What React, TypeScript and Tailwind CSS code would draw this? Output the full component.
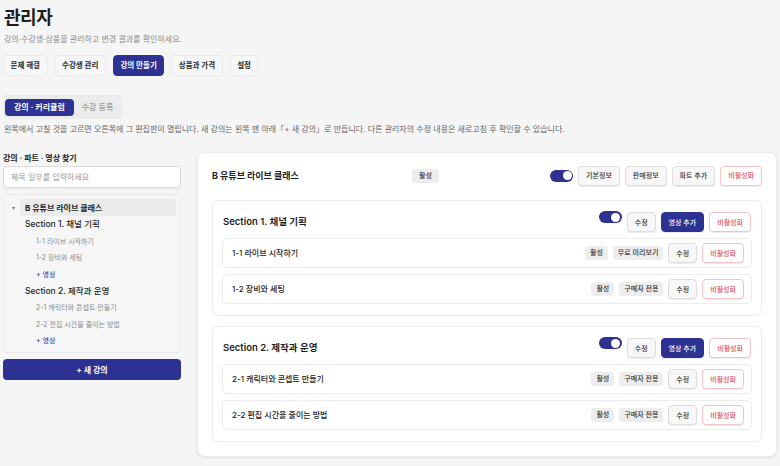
import { ReactNode } from "react";

const topTabs = ["문제 해결", "수강생 관리", "강의 만들기", "상품과 가격", "설정"];

type Video = { title: string; tags: string[] };
type Section = { title: string; videos: Video[] };

const sections: Section[] = [
  {
    title: "Section 1. 채널 기획",
    videos: [
      { title: "1-1 라이브 시작하기", tags: ["활성", "무료 미리보기"] },
      { title: "1-2 장비와 세팅", tags: ["활성", "구매자 전용"] },
    ],
  },
  {
    title: "Section 2. 제작과 운영",
    videos: [
      { title: "2-1 캐릭터와 콘셉트 만들기", tags: ["활성", "구매자 전용"] },
      { title: "2-2 편집 시간을 줄이는 방법", tags: ["활성", "구매자 전용"] },
    ],
  },
];

const Btn = ({ children, tone = "plain" }: { children: ReactNode; tone?: "plain" | "primary" | "danger" }) => {
  const cls =
    tone === "primary"
      ? "bg-[#2d3192] text-white border-[#2d3192]"
      : tone === "danger"
        ? "bg-white text-[#e25656] border-[#f3c4c4]"
        : "bg-[#f7f7f7] text-[#333] border-[#dedede]";
  return (
    <button className={`h-[20px] px-[7px] rounded-[4px] border text-[7px] leading-none font-medium shadow-[0_1px_1px_rgba(0,0,0,0.08)] ${cls}`}>
      {children}
    </button>
  );
};

const Badge = ({ children }: { children: ReactNode }) => (
  <span className="h-[14px] px-[5px] rounded-[3px] bg-[#ededed] text-[#333] text-[7px] leading-[14px] font-medium">{children}</span>
);

const Toggle = () => (
  <span className="relative inline-block w-[23px] h-[12px] rounded-full bg-[#2d3192]">
    <span className="absolute right-[1.5px] top-[1.5px] w-[9px] h-[9px] rounded-full bg-white" />
  </span>
);

export default function App() {
  return (
    <div
      className="min-h-[466px] w-[780px] bg-[#f5f5f5] px-[3px] pt-[6px] text-[#1d1d1f]"
      style={{ fontFamily: 'Inter, "Noto Sans CJK KR", sans-serif' }}
    >
      <h1 className="h-[24px] pl-[1px] text-[18px] leading-[24px] font-bold tracking-tight">관리자</h1>
      <p className="mt-[3px] h-[12px] pl-[1px] text-[8px] leading-[12px] text-[#8a8a8a]">강의·수강생·상품을 관리하고 변경 결과를 확인하세요.</p>

      <div className="mt-[10px] flex gap-[7px]">
        {topTabs.map((t) => (
          <button
            key={t}
            className={`h-[21px] px-[6.5px] rounded-[4px] border text-[7.5px] leading-none font-semibold ${
              t === "강의 만들기" ? "bg-[#2d3192] border-[#2d3192] text-white" : "bg-[#f7f7f7] border-[#ebebeb] text-[#2a2a2a]"
            }`}
          >
            {t}
          </button>
        ))}
      </div>

      <div className="mt-[19px] h-[24px] inline-flex items-center gap-[8px] rounded-[4px] bg-[#ececec] pl-[2px] pr-[9px]">
        <span className="h-[17px] px-[9px] rounded-[4px] bg-[#2d3192] text-white text-[8px] leading-[17px] font-semibold">강의 · 커리큘럼</span>
        <span className="text-[8px] leading-none text-[#9a9a9a] font-medium">수강 등록</span>
      </div>

      <p className="mt-[4px] h-[12px] pl-[1px] text-[8px] leading-[12px] text-[#666] whitespace-nowrap">
        왼쪽에서 고칠 것을 고르면 오른쪽에 그 편집판이 열립니다. 새 강의는 왼쪽 맨 아래「+ 새 강의」로 만듭니다. 다른 관리자의 수정 내용은 새로고침 후 확인할 수 있습니다.
      </p>

      <div className="mt-[17px] flex items-start gap-[16px]">
        <aside className="w-[178px] shrink-0">
          <div className="h-[12px] text-[8px] leading-[12px] font-bold text-[#222]">강의 · 파트 · 영상 찾기</div>
          <input
            placeholder="제목 일부를 입력하세요"
            className="block mt-[2px] w-full h-[22px] px-[7px] rounded-[4px] border border-[#dcdcdc] bg-white text-[8px] placeholder:text-[#9a9a9a] shadow-[0_1px_1px_rgba(0,0,0,0.05)] outline-none"
          />
          <div className="mt-[6px] h-[159px] rounded-[4px] border border-[#ececec] bg-[#f6f6f6] pl-[16px] pr-[4px] pt-[4px]">
            <div className="relative flex items-center h-[17px] rounded-[2px] bg-[#ebebeb] pl-[5px]">
              <span className="absolute -left-[11px] top-0 w-[8px] h-[17px] flex items-center justify-center text-[6px] text-[#777]">▾</span>
              <span className="text-[8px] leading-none font-bold text-[#1d1d1f]">B 유튜브 라이브 클래스</span>
            </div>
            {sections.map((s) => (
              <div key={s.title}>
                <div className="pl-[5px] h-[17px] flex items-center text-[8.5px] leading-none font-medium text-[#222]">{s.title}</div>
                {s.videos.map((v) => (
                  <div key={v.title} className="pl-[16px] h-[16.5px] flex items-center text-[7px] leading-none text-[#8c8c8c]">
                    {v.title}
                  </div>
                ))}
                <div className="pl-[16px] h-[16.5px] flex items-center text-[7px] leading-none text-[#3b3fa6] font-medium">+ 영상</div>
              </div>
            ))}
          </div>
          <button className="block mt-[6px] w-full h-[21px] rounded-[4px] bg-[#2d3192] text-white text-[8px] leading-none font-bold">+ 새 강의</button>
        </aside>

        <main className="flex-1 rounded-[8px] bg-white border border-[#ebebeb] shadow-[0_1px_3px_rgba(0,0,0,0.08)] px-[14px] pt-[12px] pb-[14px]">
          <div className="flex items-center h-[21px]">
            <div className="w-[200px] text-[9px] leading-none font-bold text-[#1d1d1f]">B 유튜브 라이브 클래스</div>
            <span className="h-[14px] px-[7px] rounded-[3px] bg-[#ededed] text-[#333] text-[7px] leading-[14px] font-medium">활성</span>
            <div className="ml-auto flex items-center gap-[5px]">
              <Toggle />
              <Btn>기본정보</Btn>
              <Btn>판매정보</Btn>
              <Btn>파트 추가</Btn>
              <Btn tone="danger">비활성화</Btn>
            </div>
          </div>

          <div className="mt-[14px] flex flex-col gap-[10px]">
            {sections.map((s) => (
              <section key={s.title} className="rounded-[6px] border border-[#ececec] bg-white px-[9px] pt-[11px] pb-[11px]">
                <div className="flex items-center h-[20px] pr-[1px]">
                  <div className="pl-[1px] text-[9.5px] leading-none font-semibold text-[#1d1d1f]">{s.title}</div>
                  <div className="ml-auto flex items-start gap-[5px]">
                    <span className="-mt-[1px] flex"><Toggle /></span>
                    <Btn>수정</Btn>
                    <Btn tone="primary">영상 추가</Btn>
                    <Btn tone="danger">비활성화</Btn>
                  </div>
                </div>
                <div className="mt-[6px] flex flex-col gap-[6px]">
                  {s.videos.map((v) => (
                    <div key={v.title} className="flex items-center h-[30px] rounded-[5px] border border-[#ececec] bg-white pl-[9px] pr-[7px]">
                      <span className="text-[8px] leading-none font-medium text-[#222]">{v.title}</span>
                      <div className="ml-auto flex items-center gap-[5px]">
                        {v.tags.map((t) => (
                          <Badge key={t}>{t}</Badge>
                        ))}
                        <Btn>수정</Btn>
                        <Btn tone="danger">비활성화</Btn>
                      </div>
                    </div>
                  ))}
                </div>
              </section>
            ))}
          </div>
        </main>
      </div>
    </div>
  );
}
